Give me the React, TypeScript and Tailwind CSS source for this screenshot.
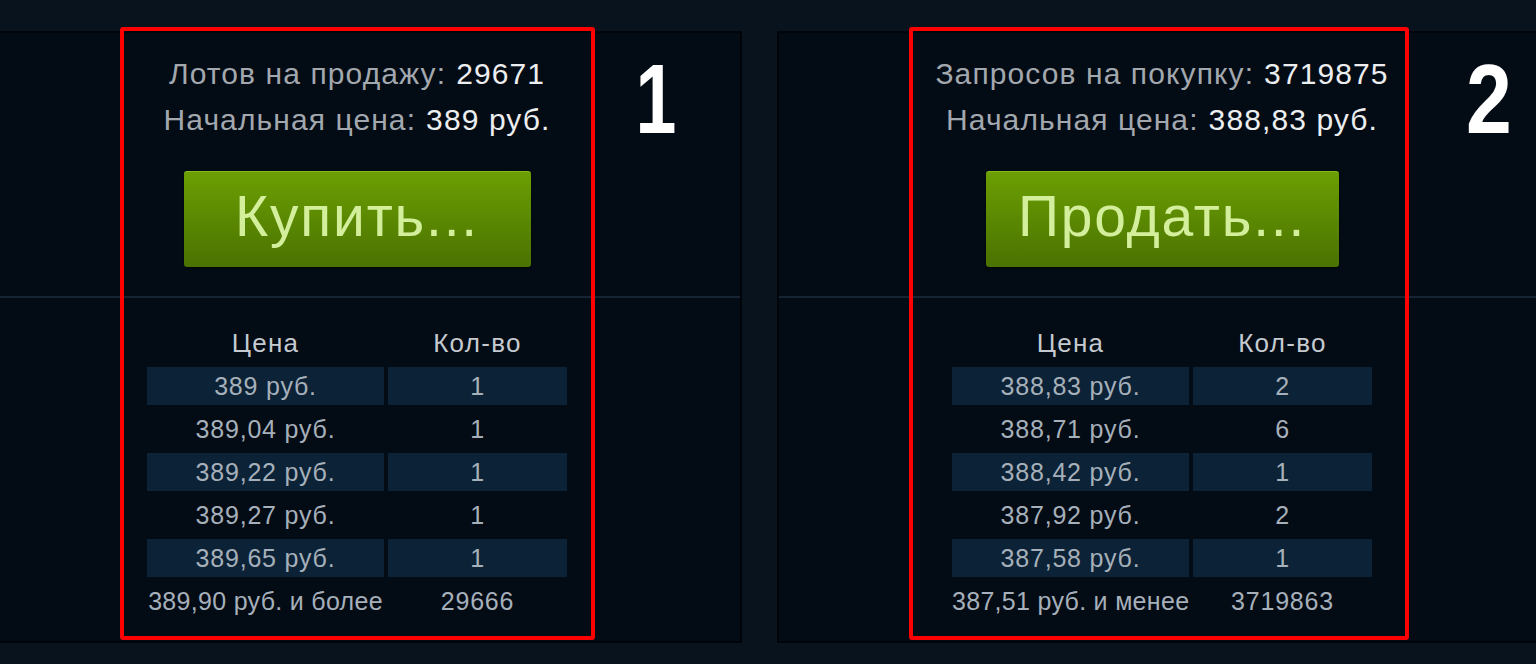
type Row = { price: string; qty: string };

type Market = {
  label: string;
  count: string;
  start: string;
  action: string;
  rows: Row[];
  last: Row;
  badge: string;
  boxClass: string;
  badgeClass: string;
  btnClass: string;
};

const markets: Market[] = [
  {
    label: 'Лотов на продажу:',
    count: '29671',
    start: '389 руб.',
    action: 'Купить...',
    rows: [
      { price: '389 руб.', qty: '1' },
      { price: '389,04 руб.', qty: '1' },
      { price: '389,22 руб.', qty: '1' },
      { price: '389,27 руб.', qty: '1' },
      { price: '389,65 руб.', qty: '1' },
    ],
    last: { price: '389,90 руб. и более', qty: '29666' },
    badge: '1',
    boxClass: 'left-[146px] w-[475px]',
    badgeClass: 'left-[642px] scale-x-75',
    btnClass: 'w-[347px]',
  },
  {
    label: 'Запросов на покупку:',
    count: '3719875',
    start: '388,83 руб.',
    action: 'Продать...',
    rows: [
      { price: '388,83 руб.', qty: '2' },
      { price: '388,71 руб.', qty: '6' },
      { price: '388,42 руб.', qty: '1' },
      { price: '387,92 руб.', qty: '2' },
      { price: '387,58 руб.', qty: '1' },
    ],
    last: { price: '387,51 руб. и менее', qty: '3719863' },
    badge: '2',
    boxClass: 'left-[130px] w-[500px]',
    badgeClass: 'left-[670px] scale-x-[0.84]',
    btnClass: 'w-[353px]',
  },
];

function OrderPanel({ m }: { m: Market }) {
  return (
    <div className="relative flex h-[612px] w-[770px] shrink-0 flex-col border-2 border-[#01050a] bg-[#030b15]">
      {/* summary + action */}
      <div className="flex h-[265px] flex-col items-center border-b-2 border-[#172433] pt-[18px]">
        <div className="whitespace-nowrap text-[30px] leading-[46px] tracking-[1.1px] text-[#a2a8ae]">
          {m.label}
          <span className="ml-[10px] text-[#eceef0]">{m.count}</span>
        </div>
        <div className="whitespace-nowrap text-[30px] leading-[46px] tracking-[1.1px] text-[#a2a8ae]">
          Начальная цена:
          <span className="ml-[10px] text-[#eceef0]">{m.start}</span>
        </div>
        <button
          className={`mt-[28px] flex h-[96px] items-center justify-center rounded-[3px] border-t border-[#86bb1c] bg-gradient-to-b from-[#6c9f03] to-[#4a7201] pb-[6px] text-[57px] tracking-[1.8px] text-[#d3ef9c] shadow-[0_1px_2px_rgba(0,0,0,0.6)] ${m.btnClass}`}
        >
          {m.action}
        </button>
      </div>

      {/* order book */}
      <div className="flex flex-1 items-start justify-center pt-[26px]">
        <div className="grid grid-cols-[237px_179px] content-start gap-x-[4px] gap-y-[5px] text-center text-[25px] tracking-[0.8px] text-[#a6b0ba]">
          <div className="h-[38px] text-[26px] leading-[38px] tracking-[1.3px] text-[#c4cad0]">Цена</div>
          <div className="h-[38px] text-[26px] leading-[38px] tracking-[1.3px] text-[#c4cad0]">Кол-во</div>
          {m.rows.map((r, i) => (
            <div key={i} className="contents">
              <div className={`h-[38px] leading-[38px] ${i % 2 === 0 ? 'bg-[#0c2236]' : ''}`}>{r.price}</div>
              <div className={`h-[38px] leading-[38px] ${i % 2 === 0 ? 'bg-[#0c2236]' : ''}`}>{r.qty}</div>
            </div>
          ))}
          <div className="h-[38px] whitespace-nowrap leading-[38px] tracking-[0.3px]">{m.last.price}</div>
          <div className="h-[38px] leading-[38px]">{m.last.qty}</div>
        </div>
      </div>

      {/* annotation overlay */}
      <div className={`pointer-events-none absolute top-[-6px] h-[613px] rounded-[3px] border-4 border-[#ff0000] ${m.boxClass}`} />
      <div className={`pointer-events-none absolute top-[17px] w-[80px] origin-center text-center text-[98px] font-bold leading-none text-white ${m.badgeClass}`}>
        {m.badge}
      </div>
    </div>
  );
}

export default function App() {
  return (
    <div
      className="h-[664px] w-full overflow-hidden bg-[#08131e]"
      style={{ fontFamily: '"Liberation Sans", Arial, sans-serif' }}
    >
      <div className="ml-[-28px] flex gap-[35px] pt-[31px]">
        {markets.map(m => (
          <OrderPanel key={m.badge} m={m} />
        ))}
      </div>
    </div>
  );
}
